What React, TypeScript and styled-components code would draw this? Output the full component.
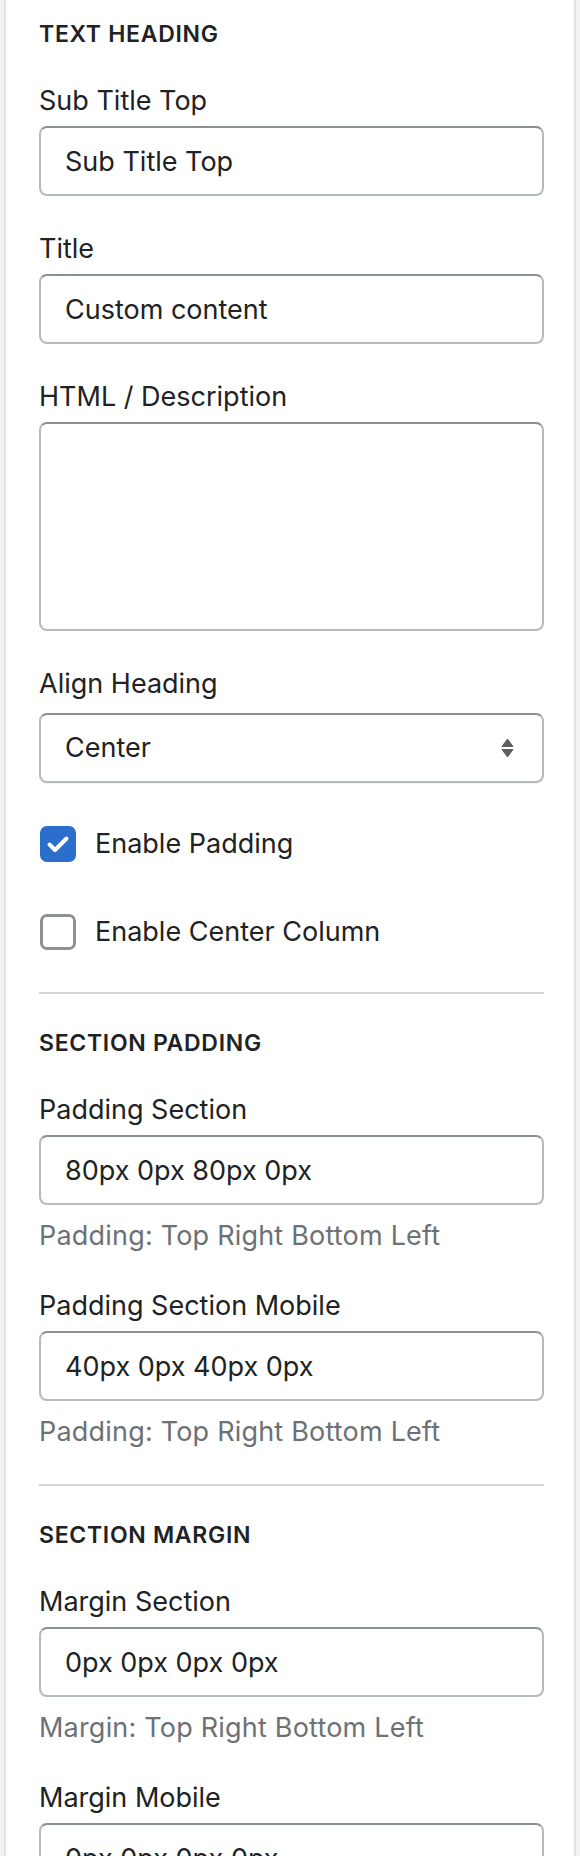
import React from "react";
import styled, { createGlobalStyle } from "styled-components";

const GlobalStyle = createGlobalStyle`
  html, body {
    margin: 0;
    padding: 0;
    background: #f1f2f3;
  }
  body {
    font-family: Inter, "Noto Sans", sans-serif;
    color: #202223;
    -webkit-font-smoothing: antialiased;
  }
  * { box-sizing: border-box; }
`;

const Panel = styled.div`
  margin: 0 4px;
  height: 1856px;
  overflow: hidden;
  background: #ffffff;
  border-left: 2px solid #e1e3e5;
  border-right: 2px solid #e1e3e5;
  padding: 18px 30px 0 33px;
  display: flex;
  flex-direction: column;
`;

const Section = styled.section`
  display: flex;
  flex-direction: column;
`;

const Heading = styled.h2`
  margin: 0 0 31px;
  font-size: 23px;
  line-height: 32px;
  font-weight: 600;
  text-transform: uppercase;
  letter-spacing: 0.7px;
  color: #202223;
`;

const Field = styled.div`
  display: flex;
  flex-direction: column;
  & + & {
    margin-top: 33px;
  }
`;

const Label = styled.label`
  font-size: 27px;
  line-height: 40px;
  color: #202223;
`;

const boxStyles = `
  width: 100%;
  border: 2px solid #b5babe;
  border-top-color: #8c9196;
  border-radius: 8px;
  background: #ffffff;
  font-family: Inter, "Noto Sans", sans-serif;
  font-size: 27px;
  line-height: 40px;
  color: #202223;
  outline: none;
`;

const TextInput = styled.input`
  ${boxStyles}
  margin-top: 5px;
  height: 70px;
  padding: 13px 24px;
`;

const TextArea = styled.textarea`
  ${boxStyles}
  display: block;
  margin-top: 5px;
  height: 209px;
  padding: 13px 24px;
  resize: none;
`;

const SelectBox = styled.div`
  ${boxStyles}
  margin-top: 9px;
  height: 70px;
  padding: 0 28px 0 24px;
  display: flex;
  align-items: center;
  justify-content: space-between;
  box-shadow: 0 1px 0 rgba(0, 0, 0, 0.05);
`;

const Help = styled.div`
  margin: 11px 0 -3px;
  font-size: 27px;
  line-height: 40px;
  letter-spacing: 0.2px;
  color: #6d7175;
`;

const CheckGroup = styled.div`
  margin-top: 41px;
  display: flex;
  flex-direction: column;
  gap: 48px;
`;

const CheckRow = styled.label`
  display: flex;
  align-items: center;
  gap: 19px;
  height: 40px;
  font-size: 27px;
  line-height: 40px;
  color: #202223;
`;

const CheckBox = styled.span<{ $checked: boolean }>`
  width: 36px;
  height: 36px;
  margin-left: 1px;
  flex: none;
  border-radius: 7px;
  display: flex;
  align-items: center;
  justify-content: center;
  background: ${(p) => (p.$checked ? "#2c6ecb" : "#ffffff")};
  border: ${(p) => (p.$checked ? "none" : "3px solid #8c9196")};
`;

const Divider = styled.div<{ $top: number }>`
  flex: none;
  width: 100%;
  height: 2px;
  margin: ${(p) => p.$top}px 0 33px;
  background: #d2d5d8;
`;

const ArrowIcon = () => (
  <svg width="13" height="20" viewBox="0 0 13 20" aria-hidden="true">
    <path d="M6.5 1 L12 8.5 H1 Z" fill="#5c5f62" strokeLinejoin="round" stroke="#5c5f62" strokeWidth="1" />
    <path d="M1 11.5 H12 L6.5 19 Z" fill="#5c5f62" strokeLinejoin="round" stroke="#5c5f62" strokeWidth="1" />
  </svg>
);

const CheckIcon = () => (
  <svg width="36" height="36" viewBox="0 0 36 36" aria-hidden="true">
    <path
      d="M9.5 18.5 L15 24 L26.5 12.5"
      fill="none"
      stroke="#ffffff"
      strokeWidth="4"
      strokeLinecap="round"
      strokeLinejoin="round"
    />
  </svg>
);

const TextField = ({ label, value, help }: { label: string; value: string; help?: string }) => (
  <Field>
    <Label>{label}</Label>
    <TextInput type="text" defaultValue={value} readOnly />
    {help && <Help>{help}</Help>}
  </Field>
);

export default function App() {
  return (
    <>
      <GlobalStyle />
      <Panel>
        <Section>
          <Heading>Text Heading</Heading>
          <TextField label="Sub Title Top" value="Sub Title Top" />
          <TextField label="Title" value="Custom content" />
          <Field>
            <Label>HTML / Description</Label>
            <TextArea defaultValue="" readOnly />
          </Field>
          <Field>
            <Label>Align Heading</Label>
            <SelectBox>
              <span>Center</span>
              <ArrowIcon />
            </SelectBox>
          </Field>
          <CheckGroup>
            <CheckRow>
              <CheckBox $checked>
                <CheckIcon />
              </CheckBox>
              Enable Padding
            </CheckRow>
            <CheckRow>
              <CheckBox $checked={false} />
              Enable Center Column
            </CheckRow>
          </CheckGroup>
        </Section>
        <Divider $top={40} />
        <Section>
          <Heading>Section Padding</Heading>
          <TextField
            label="Padding Section"
            value="80px 0px 80px 0px"
            help="Padding: Top Right Bottom Left"
          />
          <TextField
            label="Padding Section Mobile"
            value="40px 0px 40px 0px"
            help="Padding: Top Right Bottom Left"
          />
        </Section>
        <Divider $top={35} />
        <Section>
          <Heading>Section Margin</Heading>
          <TextField
            label="Margin Section"
            value="0px 0px 0px 0px"
            help="Margin: Top Right Bottom Left"
          />
          <TextField label="Margin Mobile" value="0px 0px 0px 0px" />
        </Section>
      </Panel>
    </>
  );
}
